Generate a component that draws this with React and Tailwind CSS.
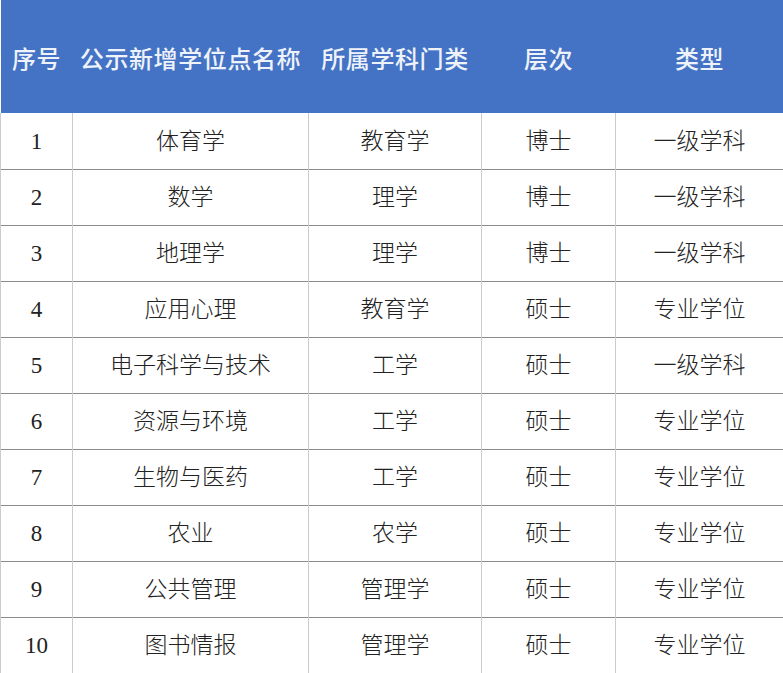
import React from "react";

const rows = [
  ["1", "体育学", "教育学", "博士", "一级学科"],
  ["2", "数学", "理学", "博士", "一级学科"],
  ["3", "地理学", "理学", "博士", "一级学科"],
  ["4", "应用心理", "教育学", "硕士", "专业学位"],
  ["5", "电子科学与技术", "工学", "硕士", "一级学科"],
  ["6", "资源与环境", "工学", "硕士", "专业学位"],
  ["7", "生物与医药", "工学", "硕士", "专业学位"],
  ["8", "农业", "农学", "硕士", "专业学位"],
  ["9", "公共管理", "管理学", "硕士", "专业学位"],
  ["10", "图书情报", "管理学", "硕士", "专业学位"],
];

const headers = ["序号", "公示新增学位点名称", "所属学科门类", "层次", "类型"];
const widths = ["w-[72px]", "w-[236px]", "w-[173px]", "w-[134px]", "w-[168px]"];

export default function App() {
  return (
    <div className="w-[783px] h-[673px] bg-white overflow-hidden">
      <table className="w-[783px] border-collapse table-fixed">
        <thead>
          <tr className="h-[113px] bg-[#4472c4]">
            {headers.map((h, i) => (
              <th
                key={h}
                className={`${widths[i]} p-0 pt-[3px] text-center align-middle text-[24px] tracking-[0.6px] font-medium text-[#eef2fa] font-['Noto_Sans_CJK_SC',sans-serif]`}
              >
                {h}
              </th>
            ))}
          </tr>
        </thead>
        <tbody>
          {rows.map((r) => (
            <tr key={r[0]} className="h-[56px] border-b border-[#8c8c8c]">
              {r.map((c, i) => (
                <td
                  key={i}
                  className="p-0 pt-[3px] text-center align-middle text-[23px] font-light text-[#222] border-x border-[#c8ccd0] font-['Liberation_Serif','Noto_Sans_CJK_SC',serif]"
                >
                  {c}
                </td>
              ))}
            </tr>
          ))}
        </tbody>
      </table>
    </div>
  );
}
